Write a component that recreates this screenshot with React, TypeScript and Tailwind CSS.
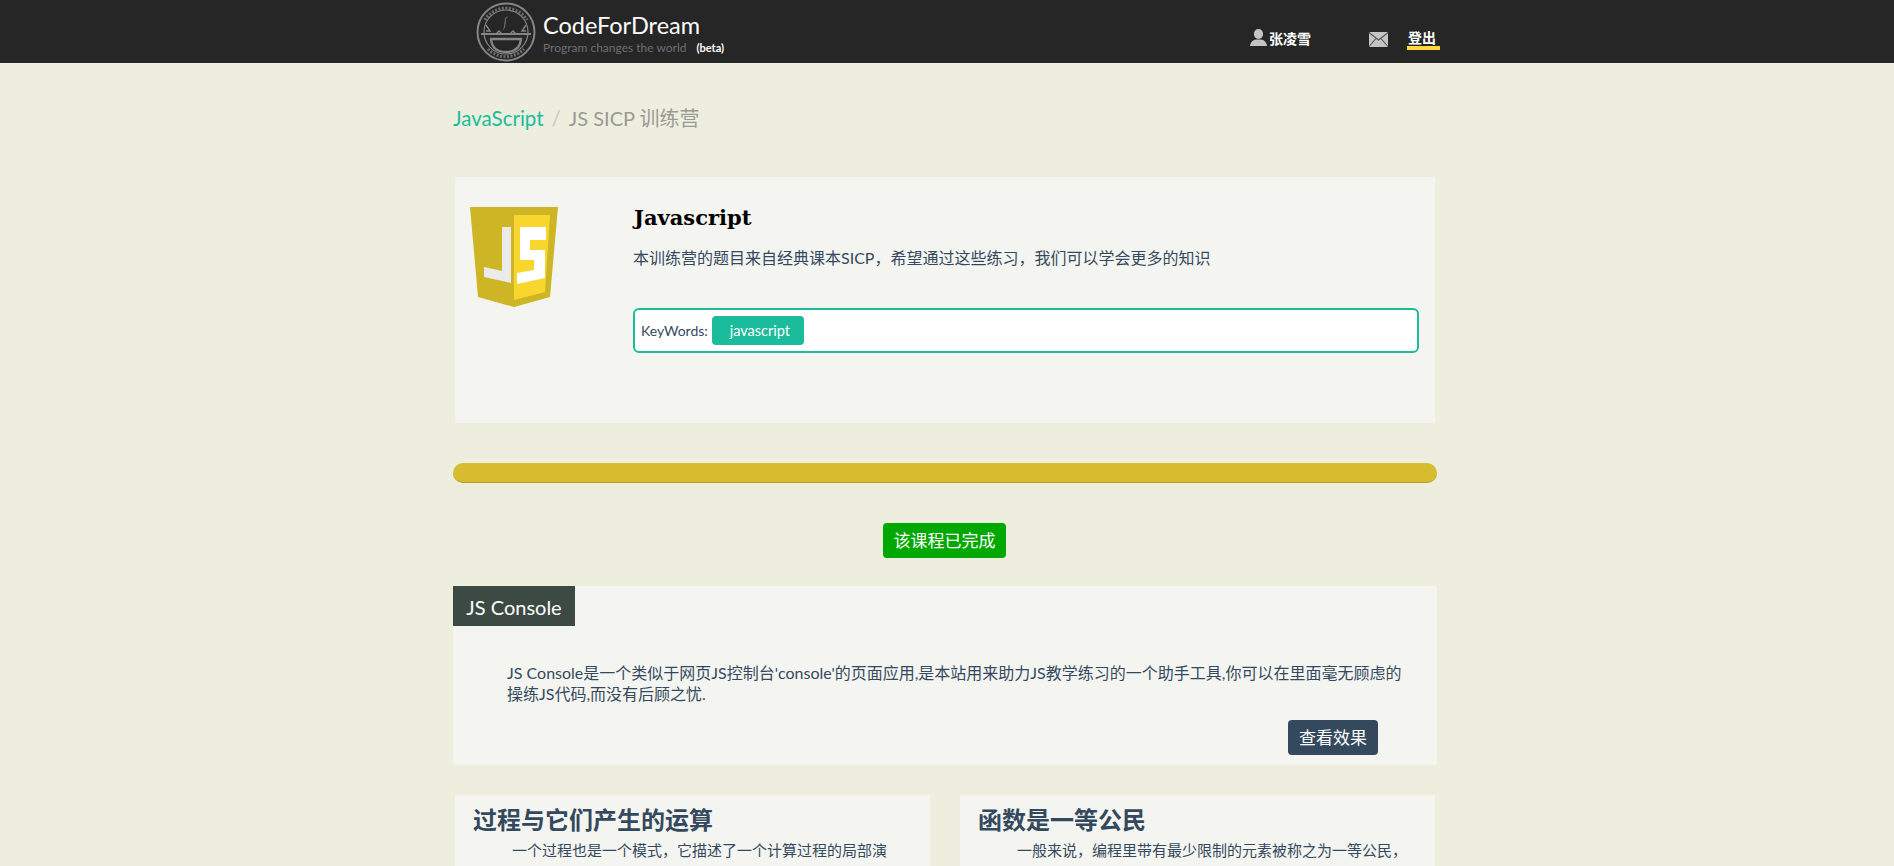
function Logo() {
  return (
    <svg width="60" height="60" viewBox="0 0 60 60" fill="none" stroke="#858585" className="shrink-0">
      <circle cx="30" cy="30" r="28.5" strokeWidth="2" />
      <circle cx="30" cy="30" r="22" strokeWidth="1.2" />
      <path d="M10 29 H14 L10 23 M50 29 H46 L50 23" strokeWidth="1.4" />
      <path d="M5 32 H55" strokeWidth="2" />
      {/* smile */}
      <path d="M15 37 H45 C44 47 38 50 30 50 C22 50 16 47 15 37 Z" strokeWidth="2.4" />
      <path d="M20 32 L23 29 L26 32 M34 32 L37 29 L40 32" strokeWidth="1.4" />
      <path d="M31.5 15 C29.5 15 29.5 17 29 21 C28.5 25 28.5 27 27 27" strokeWidth="1" />
      <path d="M9 18 A24.5 24.5 0 0 1 51 18" stroke="#6e6e6e" strokeWidth="3" strokeDasharray="2 1.5" />
      <path d="M12 47 A25 25 0 0 0 48 47" stroke="#6e6e6e" strokeWidth="3" strokeDasharray="2 1.5" />
    </svg>
  );
}

function JsShield() {
  return (
    <svg width="88" height="100" viewBox="0 0 88 100" className="shrink-0">
      <path d="M0 0 H88 L80 90 L44 100 L8 90 Z" fill="#cdb526" />
      <path d="M44 8 H80 L75 85 L44 93 Z" fill="#f9d62e" />
      <path d="M32 20 H41 V76 L14 70 V60 L32 64 Z" fill="#ebebeb" />
      <path d="M50 20 H76 V33 H60 V43 H75 V71 L47 77 V66 L64 63 V53 H50 Z" fill="#ffffff" />
    </svg>
  );
}

function UserIcon() {
  return (
    <svg width="17" height="17" viewBox="0 0 17 17" fill="#c4c4c4" className="shrink-0">
      <ellipse cx="8.5" cy="5" rx="4.6" ry="5" />
      <path d="M0 17 C0.5 12.5 3.5 11 6 10.5 H11 C13.5 11 16.5 12.5 17 17 Z" />
    </svg>
  );
}

function Envelope() {
  return (
    <svg width="19" height="15" viewBox="0 0 19 15">
      <rect width="19" height="15" rx="1.5" fill="#c4c4c4" />
      <path d="M0.5 1 L9.5 8 L18.5 1 M0.5 14 L7 6.5 M18.5 14 L12 6.5" stroke="#555" strokeWidth="1.1" fill="none" />
    </svg>
  );
}

function TopicCard({ title, text, indent }: { title: string; text: string; indent: string }) {
  return (
    <div className={`w-[475px] h-[71px] overflow-hidden bg-[#f4f5f0] ${indent}`}>
      <h3 className="pl-[18px] pt-[8px] text-[24px] leading-[34px] font-bold text-[#34495e]">{title}</h3>
      <p className="pl-[57px] pt-[3px] text-[15px] leading-[21px] text-[#34495e]">{text}</p>
    </div>
  );
}

export default function App() {
  return (
    <div
      className="h-[866px] overflow-hidden bg-[#edeede] text-[#34495e]"
      style={{ fontFamily: 'Lato, "Noto Sans CJK SC", sans-serif' }}
    >
      {/* 顶部导航 */}
      <header className="h-[63px] bg-[#262626] flex items-center">
        <div className="ml-[476px] flex items-center">
          <Logo />
          <div className="ml-[7px] w-[240px] pt-[2px]">
            <div className="text-[23.5px] leading-[30px] text-white">CodeForDream</div>
            <div className="text-[12px] leading-[16px] text-[#6f6f6f] whitespace-nowrap">
              Program changes the world
              <span className="ml-[10px] text-[11px] font-bold text-white">(beta)</span>
            </div>
          </div>
        </div>
        <div className="ml-[467px] self-start pt-[29px] flex items-start">
          <UserIcon />
          <span className="ml-[2px] text-[14px] leading-[20px] font-bold text-white">张凌雪</span>
          <div className="ml-[58px] pt-[3px]">
            <Envelope />
          </div>
          <div className="ml-[19px] w-[33px] pl-[1px] border-b-4 border-[#ffd93b] text-[14px] leading-[17px] font-bold text-white">
            登出
          </div>
        </div>
      </header>

      <main className="ml-[453px] w-[984px]">
        <div className="pt-[41px] h-[114px] text-[20.5px] leading-[28px] whitespace-nowrap">
          <span className="text-[#1abc9c]">JavaScript</span>
          <span className="mx-[8px] text-[#c8c8c4]">/</span>
          <span className="text-[20px] text-[#9a9a94]">JS SICP 训练营</span>
        </div>

        {/* 课程信息 */}
        <section className="mx-[2px] h-[246px] bg-[#f4f5f0] flex">
          <div className="w-[178px] pl-[15px] pt-[30px] shrink-0">
            <JsShield />
          </div>
          <div className="flex-1 pr-[16px]">
            <h1
              className="pt-[24px] pl-[1px] text-[21px] leading-[34px] font-bold text-black"
              style={{ fontFamily: '"DejaVu Serif", serif' }}
            >
              Javascript
            </h1>
            <p className="mt-[12px] text-[16px] leading-[22px]">
              本训练营的题目来自经典课本SICP，希望通过这些练习，我们可以学会更多的知识
            </p>
            <div className="mt-[39px] h-[45px] bg-white border-2 border-[#1abc9c] rounded-[6px] flex items-center pl-[6px]">
              <span className="text-[14px]">KeyWords:</span>
              <span className="ml-[4px] w-[92px] h-[29px] pl-[4px] rounded-[4px] bg-[#1abc9c] text-white text-[14.5px] flex items-center justify-center">
                javascript
              </span>
            </div>
          </div>
        </section>

        <div className="mt-[40px] h-[20px] rounded-[10px] bg-[#d6bc2e] border-b border-[#b79f22]"></div>

        <div className="mt-[40px] flex justify-center">
          <button className="mr-[1px] w-[123px] h-[35px] rounded-[4px] bg-[#00a800] text-white text-[17px]">
            该课程已完成
          </button>
        </div>

        {/* JS Console */}
        <section className="mt-[28px] h-[179px] bg-[#f4f5f0] rounded-b-[4px]">
          <h2 className="w-[122px] h-[40px] bg-[#3d4a44] text-white text-[20px] leading-[42px] text-center">
            JS Console
          </h2>
          <p className="mt-[36px] ml-[54px] w-[895px] text-[16px] leading-[21px]">
            JS Console是一个类似于网页JS控制台'console'的页面应用,是本站用来助力JS教学练习的一个助手工具,你可以在里面毫无顾虑的操练JS代码,而没有后顾之忧.
          </p>
          <div className="mt-[16px] mr-[59px] flex justify-end">
            <button className="w-[90px] h-[35px] rounded-[4px] bg-[#34495e] text-white text-[17px]">
              查看效果
            </button>
          </div>
        </section>

        <div className="mt-[30px] flex">
          <TopicCard indent="ml-[2px]" title="过程与它们产生的运算" text="一个过程也是一个模式，它描述了一个计算过程的局部演" />
          <TopicCard indent="ml-[30px]" title="函数是一等公民" text="一般来说，编程里带有最少限制的元素被称之为一等公民，" />
        </div>
      </main>
    </div>
  );
}
